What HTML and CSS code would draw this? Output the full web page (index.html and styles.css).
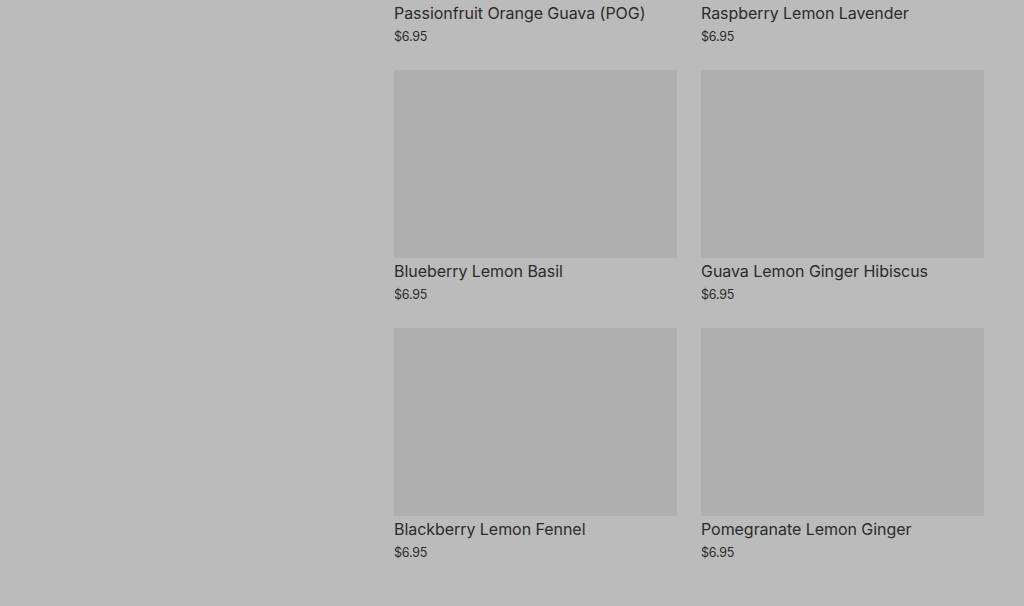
FILE: index.html
```html
<!DOCTYPE html>
<html lang="en">
<head>
<meta charset="utf-8">
<title>Products</title>
<link rel="stylesheet" href="styles.css">
</head>
<body>
<div class="page">
  <aside class="sidebar"></aside>
  <main class="grid">
    <div class="card"><div class="thumb"></div><div class="title">Passionfruit Orange Guava (POG)</div><div class="price">$6.95</div></div>
    <div class="card"><div class="thumb"></div><div class="title">Raspberry Lemon Lavender</div><div class="price">$6.95</div></div>
    <div class="card"><div class="thumb"></div><div class="title">Blueberry Lemon Basil</div><div class="price">$6.95</div></div>
    <div class="card"><div class="thumb"></div><div class="title">Guava Lemon Ginger Hibiscus</div><div class="price">$6.95</div></div>
    <div class="card"><div class="thumb"></div><div class="title">Blackberry Lemon Fennel</div><div class="price">$6.95</div></div>
    <div class="card"><div class="thumb"></div><div class="title">Pomegranate Lemon Ginger</div><div class="price">$6.95</div></div>
  </main>
</div>
</body>
</html>
```
FILE: styles.css
```css
html, body {
  margin: 0;
  padding: 0;
  background: #bbbbbb;
  height: 100%;
  overflow: hidden;
}
body {
  font-family: Inter, "Noto Sans", sans-serif;
  color: #2b2b2b;
}
.page {
  display: grid;
  grid-template-columns: 314px 1fr;
  column-gap: 40px;
  padding: 0 40px;
}
.grid {
  display: grid;
  grid-template-columns: 1fr 1fr;
  gap: 24px;
  margin-top: -188px;
}
.thumb {
  height: 188px;
  background: #afafaf;
}
.title {
  font-size: 16px;
  line-height: 20px;
  margin-top: 3px;
  letter-spacing: -0.05px;
}
.price {
  font-size: 12.5px;
  line-height: 18px;
  margin-top: 5px;
  letter-spacing: -0.2px;
}
```
